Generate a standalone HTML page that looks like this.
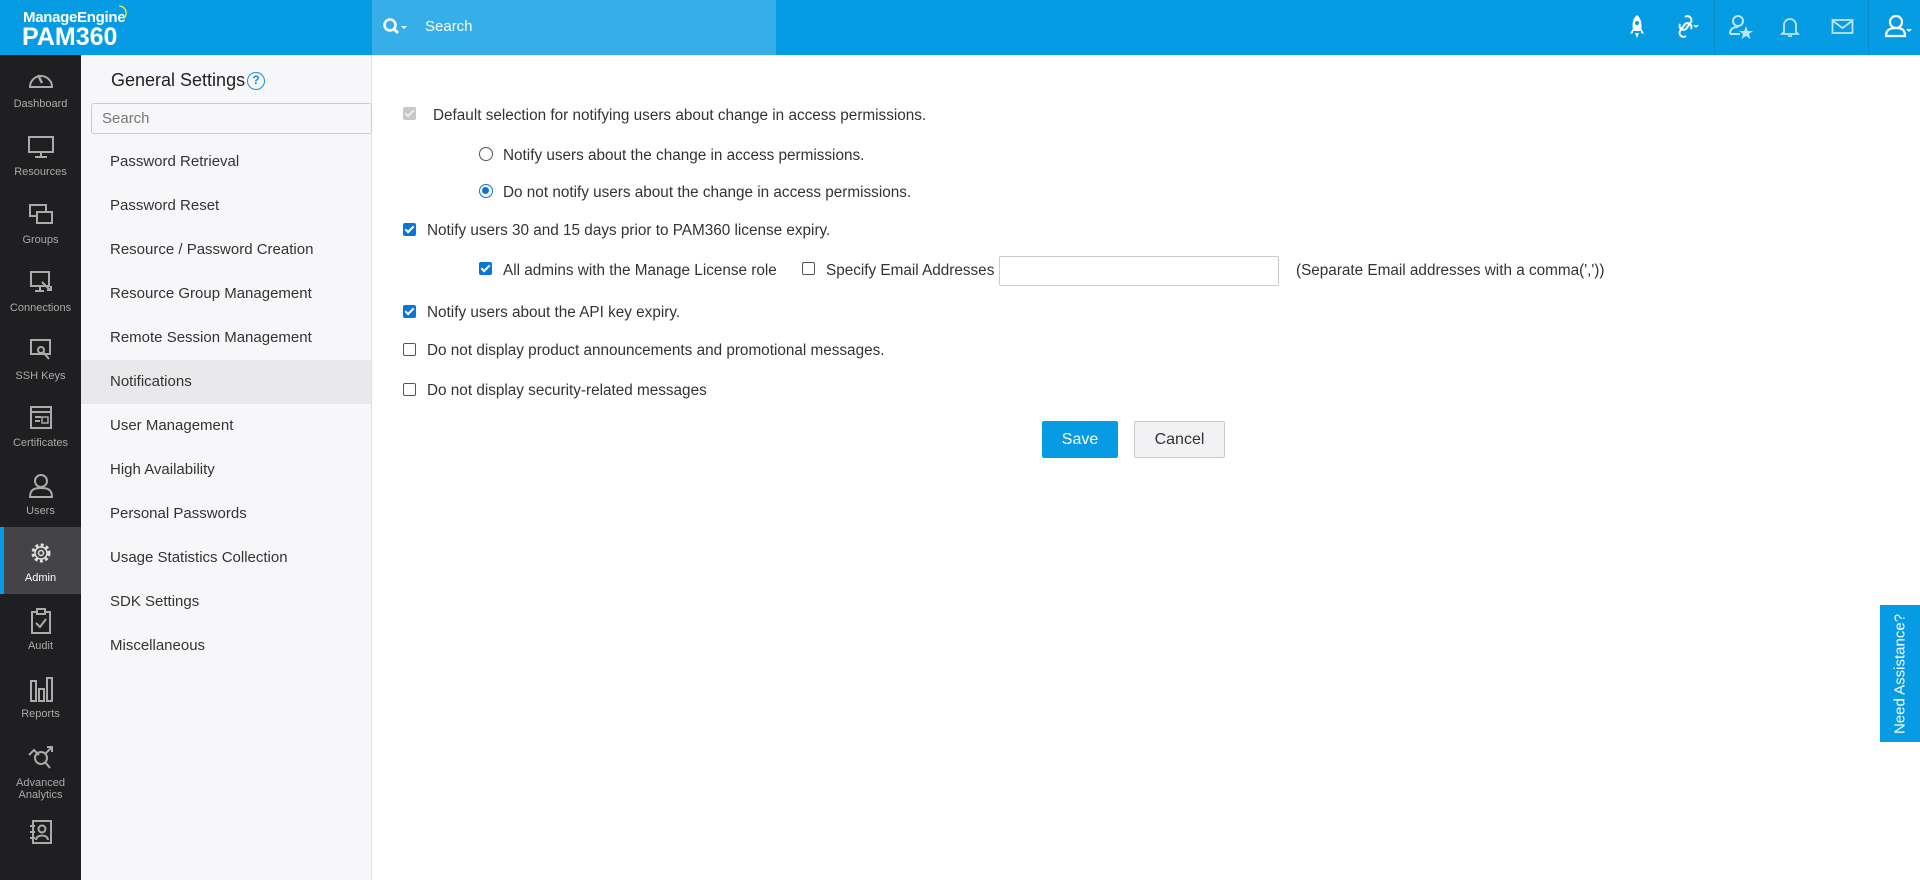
<!DOCTYPE html>
<html><head><meta charset="utf-8"><style>
*{box-sizing:border-box;margin:0;padding:0}
body{width:1920px;height:880px;overflow:hidden;font-family:"Liberation Sans",sans-serif;background:#fff;position:relative;color:#333}
.hdr{position:absolute;left:0;top:0;width:1920px;height:55px;background:#069ce3}
.logo1{position:absolute;left:23px;top:9px;color:#fff;font-size:15px;font-weight:bold;letter-spacing:-0.3px}
.logo2{position:absolute;left:22px;top:23px;color:#fff;font-size:25px;font-weight:bold}
.srch{position:absolute;left:372px;top:0;width:404px;height:55px;background:#35aeea}
.srch span{position:absolute;left:53px;top:18px;color:#fff;font-size:15px}
.sep{position:absolute;top:0;width:1px;height:55px;background:#0b8ccc}
.nav{position:absolute;left:0;top:55px;width:81px;height:825px;background:#1f1f21}
.ni{position:absolute;left:0;width:81px;text-align:center;color:#a9a9a9;font-size:11px}
.ni svg{display:block;margin:0 auto}
.side{position:absolute;left:81px;top:55px;width:291px;height:825px;background:#f7f7f9;border-right:1px solid #e2e2e2}
.side h1{position:absolute;left:30px;top:15px;font-size:18px;font-weight:normal;color:#222}
.help{position:absolute;left:166px;top:17px;width:18px;height:18px;border:1.5px solid #1a90d8;border-radius:50%;color:#1a90d8;font-size:12px;text-align:center;line-height:15px;font-weight:bold}
.sin{position:absolute;left:10px;top:48px;width:281px;height:31px;border:1px solid #ccc;border-radius:3px;background:#f7f7f9;color:#777;font-size:15px;padding:6px 10px}
.mi{position:absolute;left:0;width:290px;height:44px;line-height:44px;padding-left:29px;font-size:15px;color:#333}
.mi.sel{background:#e9e9eb}
.t{position:absolute;font-size:15.3px;color:#333;white-space:nowrap}
.cb{position:absolute;width:13px;height:13px;border-radius:2px}
.cb.on{background:#0a75d8}
.cb.on::after{content:"";position:absolute;left:4px;top:1px;width:3px;height:7px;border:solid #fff;border-width:0 2px 2px 0;transform:rotate(45deg)}
.cb.off{border:1px solid #555;background:#fff}
.cb.dis{background:#c8c8c8}
.cb.dis::after{content:"";position:absolute;left:4px;top:1px;width:3px;height:7px;border:solid #eee;border-width:0 2px 2px 0;transform:rotate(45deg)}
.rd{position:absolute;width:14px;height:14px;border-radius:50%;border:1px solid #555;background:#fff}
.rd.on{border:1.5px solid #0a75d8}
.rd.on::after{content:"";position:absolute;left:2px;top:2px;width:7px;height:7px;border-radius:50%;background:#0a75d8}
.btn{position:absolute;height:37px;display:flex;align-items:center;justify-content:center;font-size:16px;border-radius:2px}
.assist{position:absolute;left:1880px;top:605px;width:40px;height:137px;background:#079be3}
.assist span{position:absolute;left:50%;top:50%;transform:translate(-50%,-50%) rotate(-90deg);color:#fff;font-size:15px;white-space:nowrap}
</style></head><body>
<div class="hdr">
 <div class="logo1">ManageEngine</div>
 <svg style="position:absolute;left:116px;top:4px" width="14" height="16"><path d="M3 2 A7 7 0 0 1 8 14" stroke="#e9e04a" stroke-width="1.6" fill="none"/></svg>
 <div class="logo2">PAM360</div>
 <div class="srch">
  <svg style="position:absolute;left:10px;top:17px" width="26" height="20"><circle cx="8" cy="8" r="5.5" stroke="#fff" stroke-width="2.5" fill="none"/><path d="M12 12 L16 16" stroke="#fff" stroke-width="3"/><path d="M19 9 L25 9 L22 12z" fill="#fff"/></svg>
  <span>Search</span>
 </div>
 <svg style="position:absolute;left:1628px;top:14px" width="18" height="26"><path d="M9 1 C14 5 14 12 13 17 L5 17 C4 12 4 5 9 1z M5 14 L2 20 L5 19 M13 14 L16 20 L13 19 M7 19 L11 19 L9 24z" fill="#fff"/><circle cx="9" cy="9" r="2" fill="#069ce3"/></svg>
 <svg style="position:absolute;left:1674px;top:14px" width="26" height="26"><path d="M11 3 a4 4 0 0 1 6 5 l-5 7 a4 4 0 0 1 -6 -5 M12 22 a4 4 0 0 1 -6 -5 l5 -7 a4 4 0 0 1 6 5" stroke="#fff" stroke-width="2" fill="none"/><path d="M19 11 L25 11 L22 14z" fill="#fff"/></svg>
 <div class="sep" style="left:1714px"></div>
 <svg style="position:absolute;left:1728px;top:13px" width="26" height="28"><circle cx="10" cy="8" r="5" stroke="#bde4f8" stroke-width="2" fill="none"/><path d="M2 21 C2 15 6 14 10 14 M2 21 L12 21" stroke="#bde4f8" stroke-width="2" fill="none"/><path d="M18 13 L19.8 18 L25 18 L21 21 L22.5 26 L18 23 L13.5 26 L15 21 L11 18 L16.2 18z" fill="#bde4f8"/></svg>
 <svg style="position:absolute;left:1780px;top:15px" width="20" height="24"><path d="M4 17 L4 10 a6 6 0 0 1 12 0 L16 17 L18 19 L2 19z M8 21 L12 21" stroke="#bde4f8" stroke-width="1.8" fill="none"/></svg>
 <svg style="position:absolute;left:1831px;top:18px" width="24" height="18"><rect x="1.5" y="2" width="20" height="13" stroke="#bde4f8" stroke-width="1.8" fill="none"/><path d="M2 3 L11.5 10 L21 3" stroke="#bde4f8" stroke-width="1.8" fill="none"/></svg>
 <div class="sep" style="left:1868px"></div>
 <svg style="position:absolute;left:1884px;top:13px" width="30" height="28"><circle cx="12" cy="9" r="6" stroke="#fff" stroke-width="2.2" fill="none"/><path d="M2 23 C2 16 7 15 12 15 C17 15 21 16 21 23z" stroke="#fff" stroke-width="2.2" fill="none"/><path d="M22 16 L28 16 L25 19z" fill="#fff"/></svg>
</div>

<div class="nav">
 <div style="position:absolute;left:0;top:472px;width:81px;height:67px;background:#444446"></div>
 <div style="position:absolute;left:0;top:472px;width:4px;height:67px;background:#079be3"></div>
 <div class="ni" style="top:12px"><svg width="28" height="24"><path d="M3 20 a11 11 0 1 1 22 0z" stroke="#aaa" stroke-width="2" fill="none"/><path d="M11 8 L15 16" stroke="#aaa" stroke-width="2.5"/></svg><div style="margin-top:7px">Dashboard</div></div>
 <div class="ni" style="top:80px"><svg width="28" height="24"><rect x="2" y="2" width="24" height="15" stroke="#aaa" stroke-width="2" fill="none"/><path d="M14 17 V21 M8 22 H20" stroke="#aaa" stroke-width="2"/></svg><div style="margin-top:7px">Resources</div></div>
 <div class="ni" style="top:148px"><svg width="28" height="24"><rect x="3" y="2" width="16" height="11" stroke="#aaa" stroke-width="2" fill="none"/><rect x="10" y="9" width="15" height="11" stroke="#aaa" stroke-width="2" fill="#1f1f21"/></svg><div style="margin-top:7px">Groups</div></div>
 <div class="ni" style="top:215px"><svg width="28" height="26"><rect x="4" y="2" width="18" height="14" stroke="#aaa" stroke-width="2" fill="none"/><path d="M13 16 V20 M8 21 H17 M15 12 l8 8 m-3 0 h4 v-4" stroke="#aaa" stroke-width="2" fill="none"/></svg><div style="margin-top:6px">Connections</div></div>
 <div class="ni" style="top:283px"><svg width="28" height="26"><rect x="4" y="2" width="19" height="14" stroke="#aaa" stroke-width="2" fill="none"/><circle cx="14" cy="12" r="3" stroke="#aaa" stroke-width="2" fill="none"/><path d="M16 14 L22 21" stroke="#aaa" stroke-width="2"/></svg><div style="margin-top:6px">SSH Keys</div></div>
 <div class="ni" style="top:350px"><svg width="28" height="26"><rect x="4" y="2" width="20" height="21" stroke="#aaa" stroke-width="2" fill="none"/><path d="M4 7 H24 M8 12 H14 M8 16 H13" stroke="#aaa" stroke-width="2"/><rect x="15" y="12" width="6" height="6" stroke="#aaa" stroke-width="1.5" fill="none"/></svg><div style="margin-top:6px">Certificates</div></div>
 <div class="ni" style="top:418px"><svg width="28" height="26"><circle cx="14" cy="8" r="6" stroke="#aaa" stroke-width="2" fill="none"/><path d="M3 24 C3 16 8 15 14 15 C20 15 25 16 25 24z" stroke="#aaa" stroke-width="2" fill="none"/></svg><div style="margin-top:6px">Users</div></div>
 <div class="ni" style="top:485px;color:#fff"><svg width="28" height="26"><circle cx="14" cy="13" r="8" stroke="#ddd" stroke-width="3" stroke-dasharray="3 2.3" fill="none"/><circle cx="14" cy="13" r="6" stroke="#ddd" stroke-width="1.5" fill="none"/><circle cx="14" cy="13" r="2.5" stroke="#ddd" stroke-width="1.5" fill="none"/></svg><div style="margin-top:6px">Admin</div></div>
 <div class="ni" style="top:552px"><svg width="28" height="28"><rect x="5" y="5" width="18" height="21" stroke="#aaa" stroke-width="2" fill="none"/><rect x="10" y="2" width="8" height="5" stroke="#aaa" stroke-width="2" fill="#1f1f21"/><path d="M9 16 l4 4 l6 -8" stroke="#aaa" stroke-width="2" fill="none"/></svg><div style="margin-top:5px">Audit</div></div>
 <div class="ni" style="top:620px"><svg width="28" height="28"><rect x="4" y="6" width="5" height="20" stroke="#aaa" stroke-width="2" fill="none"/><rect x="12" y="14" width="5" height="12" stroke="#aaa" stroke-width="2" fill="none"/><rect x="20" y="3" width="5" height="23" stroke="#aaa" stroke-width="2" fill="none"/></svg><div style="margin-top:5px">Reports</div></div>
 <div class="ni" style="top:688px;line-height:12px"><svg width="28" height="28"><path d="M2 12 L7 7 L12 12" stroke="#aaa" stroke-width="2" fill="none"/><circle cx="14" cy="15" r="6" stroke="#aaa" stroke-width="2" fill="none"/><path d="M18 11 L25 4 M20 4 H25 V9 M18 19 L23 25" stroke="#aaa" stroke-width="2" fill="none"/></svg><div style="margin-top:6px">Advanced<br>Analytics</div></div>
 <div class="ni" style="top:763px"><svg width="28" height="28"><rect x="6" y="3" width="18" height="22" stroke="#aaa" stroke-width="2" fill="none"/><circle cx="15" cy="11" r="3.5" stroke="#aaa" stroke-width="2" fill="none"/><path d="M9 22 C9 16 21 16 21 22 M3 8 H8 M3 14 H8 M3 20 H8" stroke="#aaa" stroke-width="2" fill="none"/></svg></div>
</div>

<div class="side">
 <h1>General Settings</h1>
 <div class="help">?</div>
 <div class="sin">Search</div>
 <div class="mi" style="top:85px">Password Retrieval</div>
 <div class="mi" style="top:129px">Password Reset</div>
 <div class="mi" style="top:173px">Resource / Password Creation</div>
 <div class="mi" style="top:217px">Resource Group Management</div>
 <div class="mi" style="top:261px">Remote Session Management</div>
 <div class="mi sel" style="top:305px">Notifications</div>
 <div class="mi" style="top:349px">User Management</div>
 <div class="mi" style="top:393px">High Availability</div>
 <div class="mi" style="top:437px">Personal Passwords</div>
 <div class="mi" style="top:481px">Usage Statistics Collection</div>
 <div class="mi" style="top:525px">SDK Settings</div>
 <div class="mi" style="top:569px">Miscellaneous</div>
</div>

<div class="cb dis" style="left:403px;top:107px"></div>
<div class="t" style="left:433px;top:107px">Default selection for notifying users about change in access permissions.</div>
<div class="rd" style="left:479px;top:147px"></div>
<div class="t" style="left:503px;top:147px">Notify users about the change in access permissions.</div>
<div class="rd on" style="left:479px;top:184px"></div>
<div class="t" style="left:503px;top:184px">Do not notify users about the change in access permissions.</div>
<div class="cb on" style="left:403px;top:223px"></div>
<div class="t" style="left:427px;top:222px">Notify users 30 and 15 days prior to PAM360 license expiry.</div>
<div class="cb on" style="left:479px;top:262px"></div>
<div class="t" style="left:503px;top:262px">All admins with the Manage License role</div>
<div class="cb off" style="left:802px;top:262px"></div>
<div class="t" style="left:826px;top:262px">Specify Email Addresses</div>
<div style="position:absolute;left:999px;top:256px;width:280px;height:30px;border:1px solid #ccc;border-radius:2px"></div>
<div class="t" style="left:1296px;top:262px">(Separate Email addresses with a comma(','))</div>
<div class="cb on" style="left:403px;top:305px"></div>
<div class="t" style="left:427px;top:304px">Notify users about the API key expiry.</div>
<div class="cb off" style="left:403px;top:343px"></div>
<div class="t" style="left:427px;top:342px">Do not display product announcements and promotional messages.</div>
<div class="cb off" style="left:403px;top:383px"></div>
<div class="t" style="left:427px;top:382px">Do not display security-related messages</div>
<div class="btn" style="left:1042px;top:421px;width:76px;background:#079be3;color:#fff">Save</div>
<div class="btn" style="left:1134px;top:421px;width:91px;background:#f2f2f4;border:1px solid #ccc;color:#333">Cancel</div>

<div class="assist"><span>Need Assistance?</span></div>
</body></html>
